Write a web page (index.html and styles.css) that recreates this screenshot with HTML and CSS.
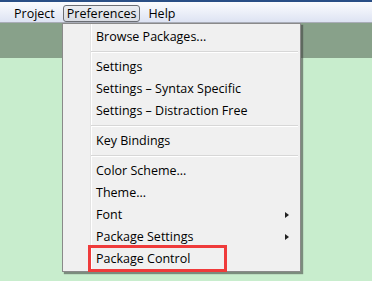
FILE: index.html
```html
<!DOCTYPE html>
<html>
<head>
<meta charset="utf-8">
<link rel="stylesheet" href="styles.css">
</head>
<body>
<div class="titlestrip"></div>
<div class="menubar">
  <span class="mb-item">Project</span>
  <span class="mb-item active">Preferences</span>
  <span class="mb-item">Help</span>
</div>
<div class="workspace">
  <div class="tabband"></div>
  <div class="menu">
    <div class="item">Browse Packages...</div>
    <div class="sep"></div>
    <div class="item">Settings</div>
    <div class="item">Settings – Syntax Specific</div>
    <div class="item">Settings – Distraction Free</div>
    <div class="sep"></div>
    <div class="item">Key Bindings</div>
    <div class="sep"></div>
    <div class="item">Color Scheme...</div>
    <div class="item">Theme...</div>
    <div class="item sub">Font</div>
    <div class="item sub">Package Settings</div>
    <div class="item"><span class="mark">Package Control</span></div>
  </div>
</div>
</body>
</html>
```

FILE: styles.css
```css
html, body {
  margin: 0;
  padding: 0;
}
body {
  width: 372px;
  height: 281px;
  overflow: hidden;
  background: #c8edcd;
  font-family: "Open Sans", "Noto Sans", sans-serif;
  font-size: 12.5px;
  color: #000;
}
.titlestrip {
  height: 2px;
  background: #2a4f86;
}
.menubar {
  height: 20px;
  border-bottom: 1px solid #a9adb8;
  background: linear-gradient(#fbfcfe 0%, #eef1f9 45%, #dde3f3 100%);
  display: flex;
  align-items: flex-end;
  padding-left: 8px;
}
.mb-item {
  height: 17px;
  line-height: 16px;
  padding: 0 5px;
  margin-right: 2px;
  box-sizing: border-box;
  border: 1px solid transparent;
}
.mb-item.active {
  padding: 0 3px;
  border: 1px solid #6b6e74;
  border-radius: 3px;
  background: linear-gradient(#eceef2, #d9dce3);
}
.workspace {
  position: relative;
  height: 258px;
}
.tabband {
  height: 35px;
  background: #88a18a;
}
.menu {
  position: absolute;
  left: 62px;
  top: 0;
  width: 237px;
  padding: 2px 0 1px 0;
  background: #f0f0f0 linear-gradient(to right, transparent 27px, #e3e3e3 27px, #e3e3e3 28px, #ffffff 28px, #ffffff 29px, transparent 29px);
  border: 1px solid #8a8a8a;
  box-shadow: 2px 2px 1px rgba(60, 60, 60, 0.55);
}
.item {
  height: 22px;
  line-height: 22px;
  padding-left: 33px;
  position: relative;
  white-space: nowrap;
}
.item.sub::after {
  content: "";
  position: absolute;
  right: 11px;
  top: 8px;
  border-left: 4px solid #222;
  border-top: 3.5px solid transparent;
  border-bottom: 3.5px solid transparent;
}
.sep {
  height: 8px;
  margin-left: 28px;
  margin-right: 2px;
  position: relative;
}
.sep::before {
  content: "";
  position: absolute;
  left: 0;
  right: 0;
  top: 3px;
  height: 1px;
  background: #d7d7d7;
  border-bottom: 1px solid #ffffff;
}
.mark {
  position: absolute;
  left: 25px;
  top: -3px;
  width: 128px;
  height: 21px;
  border: 3px solid #ef3b3b;
  padding-left: 5px;
  line-height: 21px;
}
```
